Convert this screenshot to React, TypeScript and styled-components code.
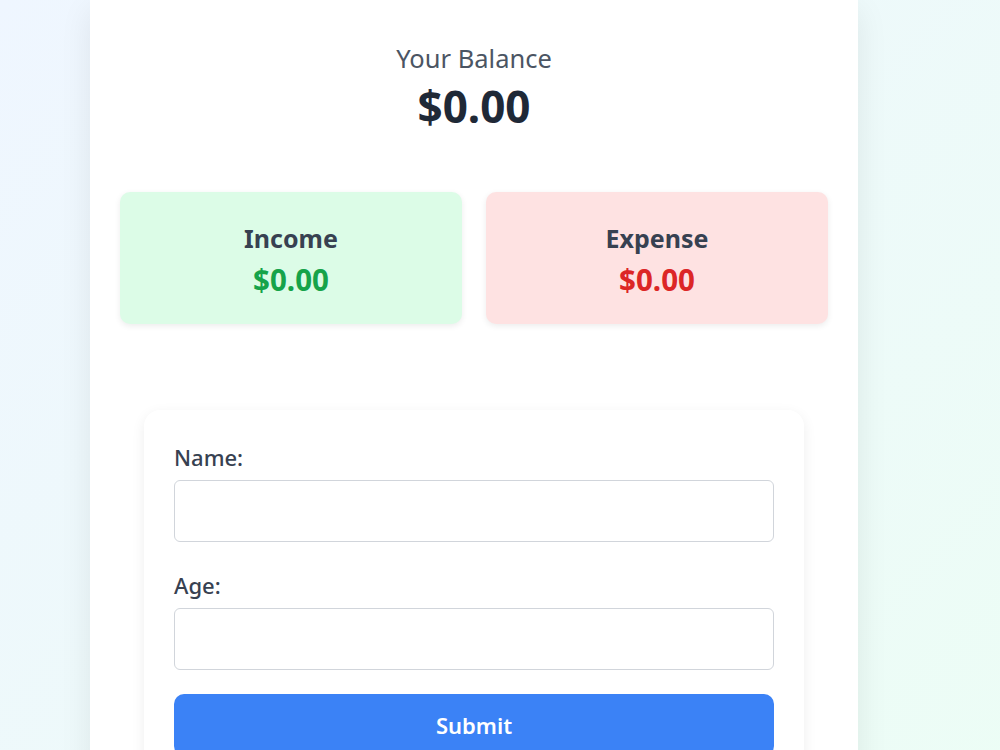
import React from "react";
import styled, { createGlobalStyle } from "styled-components";

const Global = createGlobalStyle`
  html, body { margin: 0; padding: 0; }
  body {
    font-family: "Noto Sans", "Open Sans", sans-serif;
    background: linear-gradient(135deg, #eff6ff 0%, #ecfdf5 100%);
    min-height: 100vh;
  }
`;

const Page = styled.div`
  display: flex;
  justify-content: center;
  padding-right: 52px;
  min-height: 750px;
`;

const Card = styled.div`
  width: 768px;
  flex-shrink: 0;
  box-sizing: border-box;
  background: #ffffff;
  padding: 40px 30px 30px;
  box-shadow: 0 10px 30px rgba(0, 0, 0, 0.08);
`;

const BalanceBlock = styled.div`
  text-align: center;
`;

const BalanceLabel = styled.div`
  font-size: 25.5px;
  line-height: 36px;
  color: #4b5563;
`;

const BalanceValue = styled.div`
  font-size: 44px;
  font-weight: 700;
  line-height: 60px;
  color: #1f2937;
`;

const Stats = styled.div`
  display: grid;
  grid-template-columns: 1fr 1fr;
  gap: 24px;
  margin-top: 56px;
`;

const StatBox = styled.div<{ $tone: "income" | "expense" }>`
  height: 132px;
  box-sizing: border-box;
  padding-top: 4px;
  border-radius: 10px;
  background: ${(p) => (p.$tone === "income" ? "#dcfce7" : "#fee2e2")};
  box-shadow: 0 2px 6px rgba(0, 0, 0, 0.08);
  display: flex;
  flex-direction: column;
  align-items: center;
  justify-content: center;
`;

const StatLabel = styled.div`
  font-size: 25px;
  font-weight: 700;
  line-height: 36px;
  color: #374151;
  margin-bottom: 4px;
`;

const StatValue = styled.div<{ $tone: "income" | "expense" }>`
  font-size: 29.5px;
  font-weight: 700;
  line-height: 40px;
  color: ${(p) => (p.$tone === "income" ? "#16a34a" : "#dc2626")};
`;

const Form = styled.form`
  width: 660px;
  box-sizing: border-box;
  margin: 86px auto 0;
  padding: 30px 30px;
  background: #ffffff;
  border-radius: 16px;
  box-shadow: 0 4px 14px rgba(0, 0, 0, 0.07);
  display: flex;
  flex-direction: column;
`;

const Label = styled.label`
  font-size: 22px;
  font-weight: 500;
  line-height: 36px;
  color: #374151;
  margin-top: -1px;
  margin-bottom: 5px;
`;

const Input = styled.input`
  height: 62px;
  box-sizing: border-box;
  border: 1px solid #d1d5db;
  border-radius: 6px;
  padding: 0 14px;
  font-size: 18px;
  margin-bottom: 26px;
  outline: none;
  background: #fff;
`;

const Button = styled.button`
  height: 62px;
  border: none;
  border-radius: 10px;
  background: #3b82f6;
  color: #ffffff;
  font-family: inherit;
  font-size: 22px;
  font-weight: 600;
  cursor: pointer;
  margin-top: -2px;
`;

export default function App() {
  return (
    <>
      <Global />
      <Page>
        <Card>
          <BalanceBlock>
            <BalanceLabel>Your Balance</BalanceLabel>
            <BalanceValue>$0.00</BalanceValue>
          </BalanceBlock>
          <Stats>
            <StatBox $tone="income">
              <StatLabel>Income</StatLabel>
              <StatValue $tone="income">$0.00</StatValue>
            </StatBox>
            <StatBox $tone="expense">
              <StatLabel>Expense</StatLabel>
              <StatValue $tone="expense">$0.00</StatValue>
            </StatBox>
          </Stats>
          <Form onSubmit={(e) => e.preventDefault()}>
            <Label htmlFor="name">Name:</Label>
            <Input id="name" type="text" />
            <Label htmlFor="age">Age:</Label>
            <Input id="age" type="number" />
            <Button type="submit">Submit</Button>
          </Form>
        </Card>
      </Page>
    </>
  );
}
